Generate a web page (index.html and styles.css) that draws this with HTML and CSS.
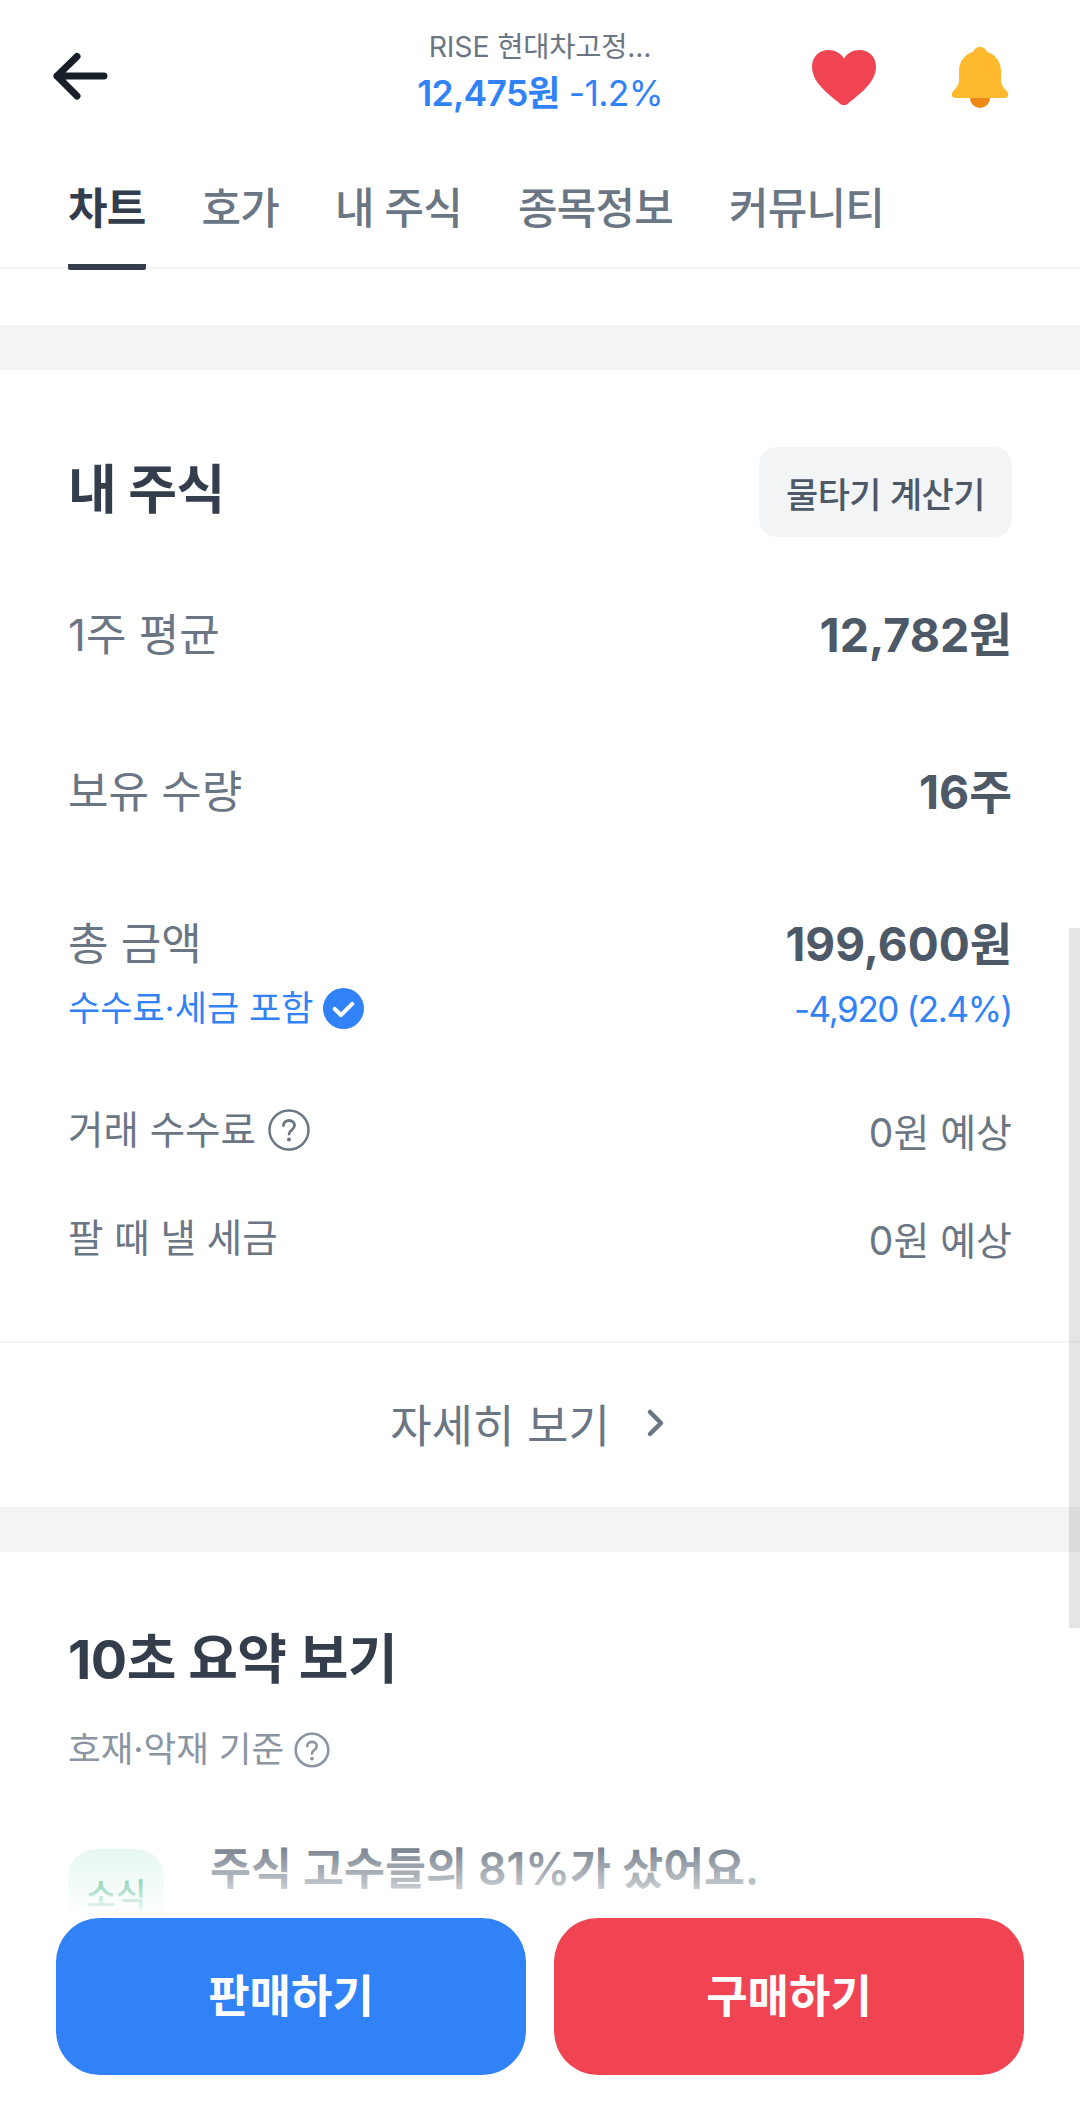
FILE: index.html
```html
<!DOCTYPE html>
<html lang="ko">
<head>
  <meta charset="UTF-8" />
  <meta name="viewport" content="width=device-width, initial-scale=1.0"/>
  <title>RISE 현대차고정</title>
  <link rel="stylesheet" href="styles.css">
</head>
<body>
  <div class="page">
    <header class="top-bar">
      <svg class="icon-back" width="58" height="50" viewBox="0 0 58 50">
        <path d="M53 24H6M26 4.500 6 24l20 20" fill="none" stroke="#191f28" stroke-width="7" stroke-linecap="round" stroke-linejoin="round"/>
      </svg>
      <div class="top-title">
        <div class="stock-name">RISE 현대차고정...</div>
        <div class="stock-price"><b>12,475원</b> -1.2%</div>
      </div>
      <div class="top-icons">
        <svg width="66" height="56" viewBox="0 0 66 56">
          <path d="M33 56c-1.500 0-3-.6-4.200-1.600C17 44.800 1 33.500 1 17.500 1 7.500 8.500 1 17.500 1 24 1 29.500 4 33 9.500 36.500 4 42 1 48.500 1 57.500 1 65 7.500 65 17.500c0 16-16 27.300-27.800 36.900-1.200 1-2.700 1.600-4.200 1.600z" fill="#f04452"/>
        </svg>
        <svg width="62" height="62" viewBox="0 0 62 62">
          <path d="M21 50h20v2a10 10 0 0 1-20 0z" fill="#ec8a13"/>
          <path d="M31 1c3.500 0 6 2 6.500 4.500C46 8 52 15.500 52 25v10c0 3 1.500 5.500 6 10.500 2.500 3 1 6.500-2.500 6.500h-49C3 52 1.500 48.500 4 45.500 8.500 40.500 10 38 10 35V25c0-9.500 6-17 14.500-19.500C25 3 27.500 1 31 1z" fill="#ffb92e"/>
        </svg>
      </div>
    </header>

    <nav class="tabs">
      <a class="tab tab-active">차트</a>
      <a class="tab">호가</a>
      <a class="tab">내 주식</a>
      <a class="tab">종목정보</a>
      <a class="tab">커뮤니티</a>
    </nav>

    <div class="chart-end"></div>
    <div class="band"></div>

    <section class="my-stock">
      <div class="section-head">
        <h2>내 주식</h2>
        <button class="btn-calc">물타기 계산기</button>
      </div>

      <div class="row row-avg">
        <span class="label">1주 평균</span>
        <span class="value">12,782원</span>
      </div>
      <div class="row row-qty">
        <span class="label">보유 수량</span>
        <span class="value">16주</span>
      </div>
      <div class="row row-total">
        <div>
          <div class="label">총 금액</div>
          <div class="note-blue">수수료·세금 포함
            <svg width="41" height="41" viewBox="0 0 40 40">
              <circle cx="20" cy="20" r="20" fill="#3182f6"/>
              <path d="M11.500 20.500l6 6 11-11" fill="none" stroke="#fff" stroke-width="4" stroke-linecap="round" stroke-linejoin="round"/>
            </svg>
          </div>
        </div>
        <div class="total-right">
          <div class="value value-total">199,600원</div>
          <div class="diff">-4,920 (2.4%)</div>
        </div>
      </div>
      <div class="row row-small row-fee">
        <span class="label-small">거래 수수료
          <svg width="42" height="42" viewBox="0 0 42 42">
            <circle cx="21" cy="21" r="19.500" fill="none" stroke="#6b7684" stroke-width="2.500"/>
            <path d="M15.500 16.500c0-3 2.500-5 5.500-5s5.500 2 5.500 5c0 4.500-5.500 4.500-5.500 8.500" fill="none" stroke="#6b7684" stroke-width="2.800" stroke-linecap="round"/>
            <circle cx="21" cy="30.500" r="2" fill="#6b7684"/>
          </svg>
        </span>
        <span class="value-small">0원 예상</span>
      </div>
      <div class="row row-small row-tax">
        <span class="label-small">팔 때 낼 세금</span>
        <span class="value-small">0원 예상</span>
      </div>

      <a class="more">자세히 보기
        <svg width="20" height="30" viewBox="0 0 20 30">
          <path d="M4 4l11 11L4 26" fill="none" stroke="#6b7684" stroke-width="4.500" stroke-linecap="round" stroke-linejoin="round"/>
        </svg>
      </a>
    </section>

    <div class="band"></div>

    <section class="summary">
      <h2>10초 요약 보기</h2>
      <div class="summary-sub">호재·악재 기준
        <svg width="36" height="36" viewBox="0 0 42 42">
          <circle cx="21" cy="21" r="19" fill="none" stroke="#8b95a1" stroke-width="3"/>
          <path d="M15.500 16.500c0-3 2.500-5 5.500-5s5.500 2 5.500 5c0 4.500-5.500 4.500-5.500 8.500" fill="none" stroke="#8b95a1" stroke-width="3" stroke-linecap="round"/>
          <circle cx="21" cy="31" r="2.200" fill="#8b95a1"/>
        </svg>
      </div>
      <div class="news">
        <div class="news-badge">소식</div>
        <div class="news-text">주식 고수들의 81%가 샀어요.</div>
      </div>
    </section>

    <div class="bottom-bar">
      <button class="btn-order btn-sell">판매하기</button>
      <button class="btn-order btn-buy">구매하기</button>
    </div>

    <div class="scroll-thumb"></div>
  </div>
</body>
</html>
```

FILE: styles.css
```css
* {
  box-sizing: border-box;
}

body {
  margin: 0;
  background-color: #fff;
  font-family: Inter, "Noto Sans CJK KR", sans-serif;
  color: #333d4b;
}

.page {
  position: relative;
  width: 1080px;
  height: 2120px;
  overflow: hidden;
  background-color: #fff;
}

.top-bar {
  display: flex;
  align-items: center;
  justify-content: space-between;
  height: 146px;
  padding: 8px 69px 0 51px;
  position: relative;
}

.top-title {
  position: absolute;
  left: 0;
  right: 0;
  top: 25px;
  text-align: center;
}

.stock-name {
  font-size: 28.500px;
  line-height: 44px;
  color: #6b7684;
  letter-spacing: -0.2px;
}

.stock-price {
  font-size: 35.500px;
  line-height: 50px;
  color: #3182f6;
  letter-spacing: -0.7px;
}

.stock-price b {
  font-weight: 600;
}

.top-icons {
  display: flex;
  align-items: center;
  gap: 72px;
}

.tabs {
  display: flex;
  gap: 56px;
  height: 123px;
  padding: 0 68px;
  border-bottom: 2px solid #f2f4f6;
}

.tab {
  height: 124px;
  padding-top: 33px;
  font-size: 43px;
  line-height: 58px;
  font-weight: 500;
  color: #6b7684;
  letter-spacing: -0.8px;
}

.tab-active {
  color: #333d4b;
  font-weight: 700;
  border-bottom: 6px solid #333d4b;
  border-radius: 0 0 2px 2px;
}

.chart-end {
  height: 56px;
}

.band {
  height: 45px;
  background-color: #f2f4f6;
}

.my-stock {
  height: 1137px;
}

.section-head {
  display: flex;
  align-items: center;
  justify-content: space-between;
  padding: 77px 68px 0;
}

.section-head h2 {
  padding-bottom: 4px;
  font-size: 53px;
}

h2 {
  margin: 0;
  font-size: 52px;
  line-height: 62px;
  font-weight: 700;
  color: #333d4b;
  letter-spacing: -0.5px;
}

.btn-calc {
  width: 253px;
  height: 90px;
  border: none;
  border-radius: 18px;
  background-color: #f2f4f6;
  font-family: inherit;
  font-size: 35px;
  font-weight: 500;
  color: #4e5968;
  letter-spacing: -0.5px;
}

.row {
  display: flex;
  justify-content: space-between;
  padding: 0 68px;
}

.row-avg {
  margin-top: 69px;
}

.row-qty {
  margin-top: 99px;
}

.row-total {
  margin-top: 94px;
}

.label {
  font-size: 44px;
  line-height: 58px;
  color: #6b7684;
}

.value {
  font-size: 46.500px;
  line-height: 58px;
  font-weight: 700;
  color: #4e5968;
}

.value-total {
  font-size: 46px;
}

.note-blue {
  display: flex;
  align-items: center;
  gap: 10px;
  margin-top: 12px;
  font-size: 35px;
  line-height: 46px;
  color: #3182f6;
}

.total-right {
  text-align: right;
}

.diff {
  margin-top: 13px;
  font-size: 35px;
  line-height: 46px;
  color: #3182f6;
  letter-spacing: -1.400px;
}

.row-small {
  align-items: center;
}

.row-fee {
  margin-top: 68px;
}

.row-tax {
  margin-top: 48px;
}

.label-small {
  display: flex;
  align-items: center;
  gap: 12px;
  font-size: 38.500px;
  line-height: 54px;
  color: #6b7684;
}

.value-small {
  padding-top: 6px;
  font-size: 39px;
  line-height: 54px;
  color: #6b7684;
}

.more {
  display: flex;
  align-items: center;
  justify-content: center;
  gap: 36px;
  height: 165px;
  margin-top: 73px;
  padding-right: 24px;
  padding-bottom: 3px;
  border-top: 2px solid #f2f4f6;
  font-size: 45px;
  color: #6b7684;
}

.summary {
  padding: 77px 68px 0;
}

.summary h2 {
  font-size: 54px;
}

.summary-sub {
  display: flex;
  align-items: center;
  gap: 10px;
  margin-top: 36px;
  font-size: 35.500px;
  line-height: 46px;
  color: #8b95a1;
}

.news {
  display: flex;
  gap: 46px;
  margin-top: 76px;
}

.news-badge {
  width: 96px;
  height: 130px;
  padding-top: 23px;
  border-radius: 28px;
  background-color: #e3f6ee;
  font-size: 33px;
  font-weight: 500;
  text-align: center;
  line-height: 46px;
  color: #1fa86f;
}

.news-text {
  margin-top: -10px;
  font-size: 44.500px;
  line-height: 60px;
  font-weight: 600;
  color: #6b7684;
}

/* fixed order buttons, page content fades out behind them */
.bottom-bar {
  position: absolute;
  left: 0;
  right: 0;
  bottom: 0;
  display: flex;
  gap: 28px;
  height: 202px;
  padding: 0 56px;
  background-color: #fff;
}

.bottom-bar::before {
  content: "";
  position: absolute;
  left: 0;
  right: 0;
  top: -78px;
  height: 78px;
  background: linear-gradient(rgba(255, 255, 255, 0), #fff);
}

.btn-order {
  flex: 1;
  height: 157px;
  padding-bottom: 8px;
  border: none;
  border-radius: 44px;
  font-family: inherit;
  font-size: 45px;
  font-weight: 600;
  color: #fff;
}

.btn-sell {
  background-color: #3182f6;
}

.btn-buy {
  background-color: #f04452;
}

.scroll-thumb {
  position: absolute;
  right: 0;
  top: 928px;
  width: 11px;
  height: 700px;
  background-color: rgba(0, 0, 0, 0.1);
}
```
